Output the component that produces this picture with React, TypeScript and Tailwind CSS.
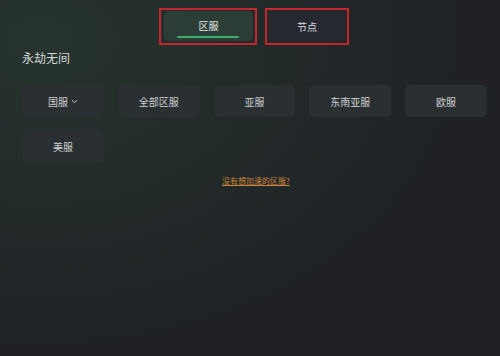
const regions = ['国服', '全部区服', '亚服', '东南亚服', '欧服', '美服'];

export default function App() {
  return (
    <div
      className="relative w-[500px] h-[356px] overflow-hidden text-[#d2d4d6]"
      style={{
        fontFamily: '"Noto Sans CJK SC", "Noto Sans", sans-serif',
        background:
          'radial-gradient(ellipse 440px 320px at 40px 40px, #27342f 0%, #232b2a 45%, #1f2125 100%)',
      }}
    >
      {/* tabs */}
      <div className="flex justify-center gap-[8px] pl-[8px] pt-[8px]">
        <div className="border-2 border-[#c3262c] pt-[1px] pb-[2px] pl-[3px] pr-[2px]">
          <div className="relative w-[89px] h-[30px] rounded-[5px] bg-[#2c3d37] flex items-center justify-center text-[10px] text-[#e2e6e4] pb-[2px]">
            区服
            <div className="absolute bottom-[3px] left-[13px] right-[14px] h-[2px] rounded-full bg-[#3dae6c]" />
          </div>
        </div>
        <div className="border-2 border-[#c3262c] pt-[2px] pb-[1px] px-[1px]">
          <div className="w-[78px] h-[30px] rounded-[5px] bg-[#262a30] flex items-center justify-center text-[10px] text-[#dcdde0] pb-[2px]">
            节点
          </div>
        </div>
      </div>

      {/* game title */}
      <div className="pl-[22px] pt-[7px] text-[12px] text-[#d4d6d6] leading-none">永劫无间</div>

      {/* region grid */}
      <div className="grid grid-cols-5 gap-x-[14px] gap-y-[13px] pl-[22px] w-[487px] mt-[21px]">
        {regions.map((r, i) => (
          <div
            key={r}
            className="h-[32px] rounded-[5px] bg-[#2a2f31] flex items-center justify-center text-[10px] text-[#d0d2d3]"
          >
            {r}
            {i === 0 && (
              <svg width="7" height="5" viewBox="0 0 7 5" className="ml-[3px]">
                <path d="M1 1.2 L3.5 3.6 L6 1.2" stroke="#c8cacb" strokeWidth="1" fill="none" />
              </svg>
            )}
          </div>
        ))}
      </div>

      {/* link */}
      <div className="flex justify-center mt-[13px] pl-[12px]">
        <span className="text-[8px] text-[#c8873a] underline underline-offset-1">没有想加速的区服?</span>
      </div>
    </div>
  );
}
